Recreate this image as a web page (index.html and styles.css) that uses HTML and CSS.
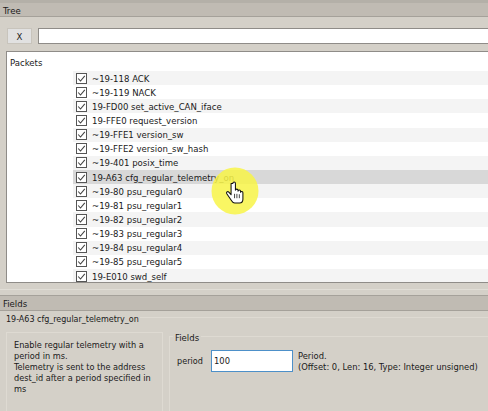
FILE: index.html
```html
<!DOCTYPE html>
<html lang="en">
<head>
<meta charset="utf-8">
<title>Tree</title>
<link rel="stylesheet" href="styles.css">
</head>
<body>
<svg class="defs" width="0" height="0">
  <symbol id="check" viewBox="0 0 11 11">
    <rect x=".5" y=".5" width="10" height="10" fill="#fff" stroke="#555"/>
    <path d="M2.200 5.500 4.500 8 8.800 2.800" fill="none" stroke="#444" stroke-width="1.100"/>
  </symbol>
</svg>
<div class="app">
  <div class="dock-title tree-title">Tree</div>
  <div class="tree-pane">
    <div class="filter">
      <button class="x-btn">X</button>
      <div class="filter-input"></div>
    </div>
    <div class="list">
      <div class="list-label">Packets</div>
      <ul class="rows">
        <li class="row row-alt"><svg class="check"><use href="#check"/></svg><span>~19-118 ACK</span></li>
        <li class="row"><svg class="check"><use href="#check"/></svg><span>~19-119 NACK</span></li>
        <li class="row row-alt"><svg class="check"><use href="#check"/></svg><span>19-FD00 set_active_CAN_iface</span></li>
        <li class="row"><svg class="check"><use href="#check"/></svg><span>19-FFE0 request_version</span></li>
        <li class="row row-alt"><svg class="check"><use href="#check"/></svg><span>~19-FFE1 version_sw</span></li>
        <li class="row"><svg class="check"><use href="#check"/></svg><span>~19-FFE2 version_sw_hash</span></li>
        <li class="row row-alt"><svg class="check"><use href="#check"/></svg><span>~19-401 posix_time</span></li>
        <li class="row row-hover"><svg class="check"><use href="#check"/></svg><span>19-A63 cfg_regular_telemetry_on</span></li>
        <li class="row row-alt"><svg class="check"><use href="#check"/></svg><span>~19-80 psu_regular0</span></li>
        <li class="row"><svg class="check"><use href="#check"/></svg><span>~19-81 psu_regular1</span></li>
        <li class="row row-alt"><svg class="check"><use href="#check"/></svg><span>~19-82 psu_regular2</span></li>
        <li class="row"><svg class="check"><use href="#check"/></svg><span>~19-83 psu_regular3</span></li>
        <li class="row row-alt"><svg class="check"><use href="#check"/></svg><span>~19-84 psu_regular4</span></li>
        <li class="row"><svg class="check"><use href="#check"/></svg><span>~19-85 psu_regular5</span></li>
        <li class="row row-alt"><svg class="check"><use href="#check"/></svg><span>19-E010 swd_self</span></li>
      </ul>
    </div>
  </div>
  <div class="splitter"></div>
  <div class="dock-title fields-title">Fields</div>
  <div class="fields-pane">
    <div class="packet-name">19-A63 cfg_regular_telemetry_on</div>
    <div class="panels">
      <div class="desc">Enable regular telemetry with a period in ms.<br>Telemetry is sent to the address dest_id after a period specified in ms</div>
      <div class="group">
        <div class="group-title">Fields</div>
        <div class="field">
          <span class="field-name">period</span>
          <div class="field-input">100</div>
          <div class="field-help">Period.<br>(Offset: 0, Len: 16, Type: Integer unsigned)</div>
        </div>
      </div>
    </div>
  </div>
  <svg class="cursor" width="60" height="60" viewBox="0 0 60 60">
    <circle cx="30" cy="30" r="23.5" fill="#f8f448" fill-opacity="0.85"/>
    <g transform="translate(6.500 5) scale(.87)">
      <path d="M22.500 20v13l-2.600-3c-1.500-1.400-3.400.2-2.300 1.900l5.500 8c1 1.600 2 2.600 3.600 2.600h5.600c2.400 0 3.800-2 3.800-4.200v-7.600c0-1.700-2.300-2-2.700-.4v-1.200c0-1.800-2.600-2-2.900-.2v-.9c0-1.800-2.800-1.900-3-.1v-7.900c0-2.200-3-2.200-3 0z" fill="#fff" stroke="#111" stroke-width="1.200" stroke-linejoin="round"/>
      <path d="M26.500 32v5M29.200 32v5M32 32.500v4.500" stroke="#111" stroke-width=".9" fill="none"/>
    </g>
  </svg>
</div>
</body>
</html>
```

FILE: styles.css
```css
* { box-sizing: border-box; }
html, body { margin: 0; height: 100%; }
body { background: #d4d0c8; font-family: "DejaVu Sans", "Liberation Sans", sans-serif; font-stretch: condensed; font-size: 9.5px; color: #1a1a1a; overflow: hidden; }
.defs { position: absolute; }
.app { position: relative; width: 488px; height: 411px; overflow: hidden; display: flex; flex-direction: column; background: #d4d0c8; border-top: 3px solid #b4b0a8; }
.dock-title { flex: none; background: #c0bbb3; line-height: 15px; padding-left: 3px; border-bottom: 1px solid #a5a19a; }
.tree-title { height: 14px; }
.tree-pane { flex: none; display: flex; flex-direction: column; padding: 11px 0 0 6px; height: 266px; }
.filter { flex: none; display: flex; gap: 6px; height: 16px; margin-left: 1px; }
.x-btn { width: 25px; height: 16px; padding: 0; border: 1px solid #c8c4bc; background: #e1e1e1; font-family: inherit; font-stretch: condensed; font-size: 9.5px; color: #222; }
.filter-input { flex: 1; background: #fff; border: 1px solid #8f8c88; border-right: 0; }
.list { margin-top: 7px; flex: 1; background: #fff; border: 1px solid #8f8c88; border-right: 0; padding-top: 4px; overflow: hidden; }
.list-label { height: 15px; line-height: 13px; padding-left: 3px; }
.rows { list-style: none; margin: 0 0 0 66px; padding: 0; }
.row { height: 14.15px; display: flex; align-items: center; padding-left: 3px; gap: 5px; white-space: nowrap; }
.row-alt { background: #f4f4f4; }
.row-hover { background: #d8d8d8; }
.check { flex: none; width: 11px; height: 11px; }
.splitter { flex: none; height: 12px; background: linear-gradient(#d4d0c8 6px, #e0ddd6 6px, #e0ddd6 7px, #d4d0c8 7px); }
.fields-title { height: 16px; border-top: 1px solid #a5a19a; line-height: 15px; }
.fields-pane { flex: 1; position: relative; margin: 6px 0 0 5px; padding-left: 1px; border-top: 1px solid #dedad2; }
.packet-name { position: absolute; left: 0; top: -6px; padding: 0 1px; height: 14px; line-height: 14px; font-size: 8.9px; background: #d4d0c8; }
.panels { display: flex; margin-top: 14px; gap: 6px; }
.desc { flex: none; width: 157px; height: 90px; border: 1px solid #dedad2; border-bottom: 0; padding: 7px 7px; line-height: 10.9px; font-size: 9.1px; }
.group { flex: 1; position: relative; margin-top: 4px; height: 90px; border: 1px solid #dedad2; border-right: 0; padding: 13px 0 0 7px; }
.group-title { position: absolute; top: -5px; left: 5px; padding: 0 2px; margin-left: -2px; background: #d4d0c8; }
.field { display: flex; align-items: center; font-size: 9.3px; }
.field-name { flex: none; width: 34px; font-size: 9px; }
.field-input { flex: none; width: 82px; height: 22px; background: #fff; border: 1px solid #4d90c9; padding-left: 2px; line-height: 20px; }
.field-help { margin-left: 5px; line-height: 11px; white-space: nowrap; }
.cursor { position: absolute; left: 205px; top: 158px; pointer-events: none; }
```
